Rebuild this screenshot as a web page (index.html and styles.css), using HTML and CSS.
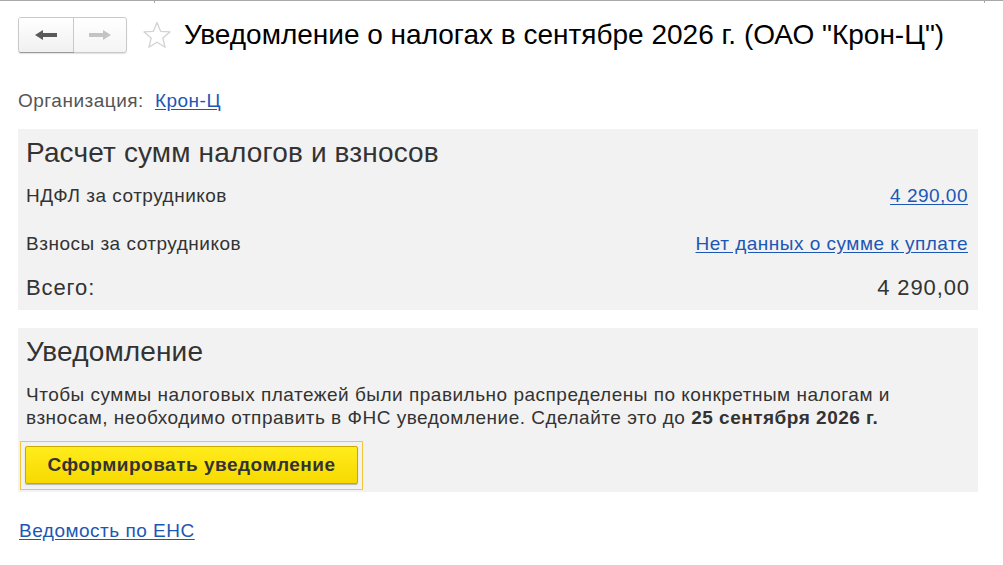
FILE: index.html
```html
<!DOCTYPE html>
<html lang="ru">
<head>
<meta charset="utf-8">
<title>Уведомление о налогах</title>
<link rel="stylesheet" href="styles.css">
</head>
<body>
<div class="topline"><span class="tick t1"></span><span class="tick t2"></span></div>
<div class="page">
  <header class="header">
    <div class="navgroup">
      <button class="navbtn back" aria-label="Назад">
        <svg width="22" height="10" viewBox="0 0 22 10"><path d="M0 5 L8 0 L8 3 L22 3 L22 7 L8 7 L8 10 Z" fill="#5a5a5a"/></svg>
      </button>
      <button class="navbtn fwd" aria-label="Вперёд">
        <svg width="22" height="10" viewBox="0 0 22 10"><path d="M22 5 L14 0 L14 3 L0 3 L0 7 L14 7 L14 10 Z" fill="#c4c4c4"/></svg>
      </button>
    </div>
    <svg class="star" width="30" height="30" viewBox="0 0 30 30"><path d="M15 2.5 L18.6 11.3 L28 11.9 L20.8 18 L23.1 27.3 L15 22.2 L6.9 27.3 L9.2 18 L2 11.9 L11.4 11.3 Z" fill="none" stroke="#d2d2d2" stroke-width="1.3" stroke-linejoin="round"/></svg>
    <h1 class="title">Уведомление о налогах в сентябре 2026 г. (ОАО "Крон-Ц")</h1>
  </header>

  <div class="org">
    <span class="org-label">Организация:</span>
    <a class="link" href="#">Крон-Ц</a>
  </div>

  <section class="panel calc">
    <h2 class="panel-title">Расчет сумм налогов и взносов</h2>
    <div class="row">
      <span>НДФЛ за сотрудников</span>
      <a class="link" href="#">4 290,00</a>
    </div>
    <div class="row">
      <span>Взносы за сотрудников</span>
      <a class="link" href="#">Нет данных о сумме к уплате</a>
    </div>
    <div class="row total">
      <span>Всего:</span>
      <span class="total-val">4 290,00</span>
    </div>
  </section>

  <section class="panel notice">
    <h2 class="panel-title">Уведомление</h2>
    <p class="notice-text">Чтобы суммы налоговых платежей были правильно распределены по конкретным налогам и<br>взносам, необходимо отправить в ФНС уведомление. Сделайте это до <b>25 сентября 2026 г.</b></p>
    <div class="focus">
      <button class="primary">Сформировать уведомление</button>
    </div>
  </section>

  <a class="link bottom-link" href="#">Ведомость по ЕНС</a>
</div>
</body>
</html>
```

FILE: styles.css
```css
html, body {
  margin: 0;
  padding: 0;
  background: #fff;
}
body {
  font-family: "Liberation Sans", Arial, sans-serif;
  color: #333;
  width: 1003px;
  height: 565px;
  overflow: hidden;
  position: relative;
}
.topline {
  height: 1px;
  background: #a8a8a8;
  position: relative;
}
.tick {
  position: absolute;
  top: 1px;
  width: 1px;
  height: 2px;
  background: #a8a8a8;
}
.t1 { left: 154px; }
.t2 { left: 984px; }

.page {
  padding: 15px 0 0 18px;
}
.header {
  display: flex;
  align-items: center;
  height: 37px;
}
.navgroup {
  display: flex;
  height: 36px;
  border: 1px solid #c9c9c9;
  border-radius: 3px;
  box-shadow: 0 1px 1px rgba(0,0,0,0.12);
  background: linear-gradient(#ffffff, #f4f4f4);
  box-sizing: border-box;
}
.navbtn {
  border: 0;
  background: transparent;
  padding: 0;
  margin: 0;
  display: flex;
  align-items: center;
  justify-content: center;
  height: 34px;
}
.navbtn.back {
  width: 55px;
  border-right: 1px solid #c9c9c9;
  background: linear-gradient(#ffffff, #f0f0f0);
  border-radius: 2px 0 0 2px;
  box-shadow: 0 1px 0 #9a9a9a;
}
.navbtn.fwd {
  width: 52px;
}
.star {
  margin-left: 15px;
  flex: none;
}
.title {
  margin: 0 0 0 12px;
  font-weight: normal;
  font-size: 28px;
  color: #000;
  white-space: nowrap;
}

.org {
  margin-top: 36px;
  line-height: 24px;
  font-size: 19px;
  letter-spacing: 0.5px;
  display: flex;
  gap: 11px;
}
.org-label {
  color: #555;
}
.link {
  color: #1c57b4;
  text-decoration: underline;
  text-underline-offset: 2px;
}

.panel {
  width: 960px;
  background: #f2f2f2;
  box-sizing: border-box;
}
.calc {
  margin-top: 16px;
  padding: 8px 10px 2px 8px;
}
.panel-title {
  margin: 0;
  font-weight: normal;
  font-size: 28px;
  letter-spacing: 0.15px;
  line-height: 32px;
  color: #333;
}
.calc .panel-title {
  margin-bottom: 3px;
}
.row {
  display: flex;
  justify-content: space-between;
  align-items: center;
  height: 48px;
  font-size: 19px;
  letter-spacing: 0.5px;
}
.row.total {
  height: 40px;
  font-size: 22px;
  letter-spacing: 0.9px;
  margin-right: -2px;
}

.notice {
  margin-top: 18px;
  padding: 8px 10px 2px 8px;
}
.notice-text {
  margin: 15px 0 0 0;
  font-size: 19px;
  letter-spacing: 0.5px;
  line-height: 23px;
}
.notice-text b {
  font-weight: bold;
}
.focus {
  margin: 12px 0 0 -6px;
  width: 343px;
  height: 49px;
  border: 1px solid #f2c838;
  box-sizing: border-box;
  padding: 4px;
}
.primary {
  width: 333px;
  height: 38px;
  border: 1px solid #c9a800;
  border-radius: 2px;
  background: linear-gradient(#ffec1c, #f7d900);
  box-shadow: 0 1px 1px rgba(0,0,0,0.25);
  font-family: "Liberation Sans", Arial, sans-serif;
  font-weight: bold;
  font-size: 19px;
  letter-spacing: 0.5px;
  color: #333;
  padding: 0;
}
.bottom-link {
  display: inline-block;
  margin: 27px 0 0 1px;
  font-size: 19px;
  letter-spacing: 0.5px;
  line-height: 24px;
}
```
